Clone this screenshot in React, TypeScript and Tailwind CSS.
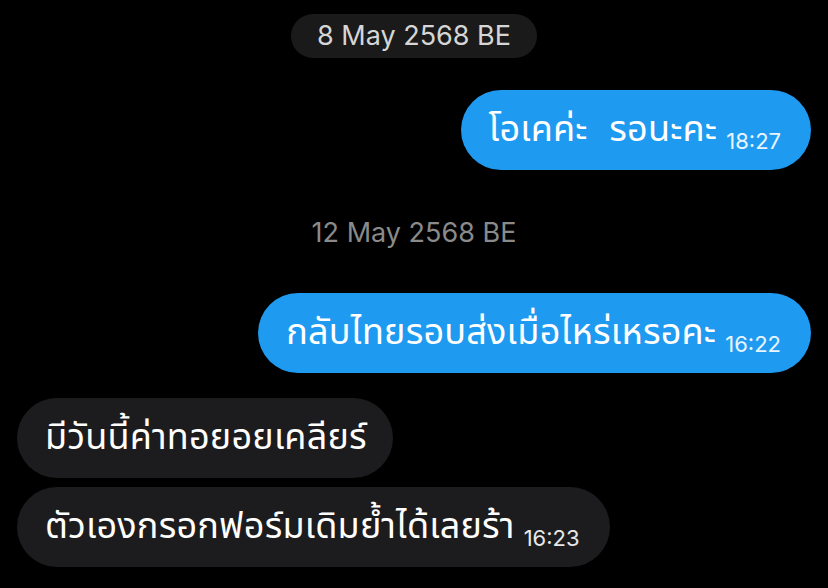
import React from "react";

const thai = {fontFamily: '"Noto Sans Thai", "Noto Sans", "DejaVu Sans", sans-serif'};
const latin = {fontFamily: 'Inter, Roboto, "Noto Sans", sans-serif'};

type BubbleProps = {
  text: string;
  time?: string;
  mine?: boolean;
};

const Bubble = ({text, time, mine}: BubbleProps) => {
  return (
    <div
      className={`flex h-[80px] items-center rounded-full pl-[28px] ${time ? "pr-[30px]" : "pr-[26px]"} ${
        mine ? "self-end bg-[#1f9af1]" : "self-start bg-[#1c1c1e]"
      }`}>
      <span
        className="text-[36px] leading-none tracking-[0.2px] text-white [word-spacing:12px]"
        style={thai}>
        {text}
      </span>
      {time && (
        <span
          className="ml-[9px] mt-[22px] text-[22px] leading-none text-white/90"
          style={latin}>
          {time}
        </span>
      )}
    </div>
  );
};

export default function App() {
  return (
    <div className="flex h-[588px] w-[828px] flex-col bg-black px-[17px] pt-[14px]">
      <div
        className="self-center rounded-full bg-[#1a1a1a] px-[26px] py-[8px] text-[27px] leading-[28px] text-[#d6d6d6]"
        style={latin}>
        8 May 2568 BE
      </div>
      <div className="mt-[32px] flex flex-col">
        <Bubble text="โอเคค่ะ รอนะคะ" time="18:27" mine />
      </div>
      <div
        className="mt-[49px] self-center text-[27px] leading-[28px] text-[#8a8a8a]"
        style={latin}>
        12 May 2568 BE
      </div>
      <div className="mt-[46px] flex flex-col">
        <Bubble text="กลับไทยรอบส่งเมื่อไหร่เหรอคะ" time="16:22" mine />
      </div>
      <div className="mt-[25px] flex flex-col gap-[9px]">
        <Bubble text="มีวันนี้ค่าทอยอยเคลียร์" />
        <Bubble text="ตัวเองกรอกฟอร์มเดิมย้ำได้เลยร้า" time="16:23" />
      </div>
    </div>
  );
}
